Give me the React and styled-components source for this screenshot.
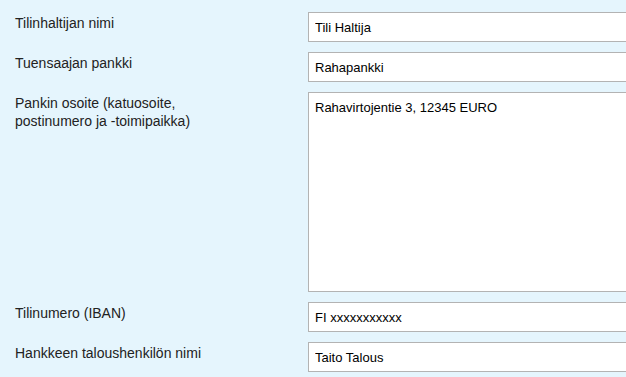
import React from "react";
import styled, { createGlobalStyle } from "styled-components";

const Global = createGlobalStyle`
  html, body {
    margin: 0;
    padding: 0;
    background: #e5f5fd;
    overflow: hidden;
  }
  body {
    font-family: "Liberation Sans", Arial, sans-serif;
  }
`;

const Form = styled.div`
  display: grid;
  grid-template-columns: 293px 340px;
  row-gap: 10px;
  padding: 12px 0 0 15px;
`;

const Label = styled.label`
  font-size: 14px;
  line-height: 18px;
  color: #222;
  padding-top: 2px;
`;

const Field = styled.input`
  box-sizing: border-box;
  height: 30px;
  width: 100%;
  margin: 0;
  padding: 0 6px;
  border: 1px solid #b3b3b3;
  background: #fff;
  font-family: "Liberation Sans", Arial, sans-serif;
  font-size: 13px;
  color: #000;
  outline: none;
`;

const Area = styled.textarea`
  box-sizing: border-box;
  height: 200px;
  width: 100%;
  margin: 0;
  padding: 6px 6px;
  border: 1px solid #b3b3b3;
  background: #fff;
  font-family: "Liberation Sans", Arial, sans-serif;
  font-size: 13px;
  line-height: 17px;
  color: #000;
  resize: none;
  outline: none;
  display: block;
`;

const rows = [
  { label: "Tilinhaltijan nimi", value: "Tili Haltija" },
  { label: "Tuensaajan pankki", value: "Rahapankki" },
  {
    label: (
      <>
        Pankin osoite (katuosoite,
        <br />
        postinumero ja -toimipaikka)
      </>
    ),
    value: "Rahavirtojentie 3, 12345 EURO",
    multi: true,
  },
  { label: "Tilinumero (IBAN)", value: "FI xxxxxxxxxxx" },
  { label: "Hankkeen taloushenkilön nimi", value: "Taito Talous" },
];

export default function App() {
  return (
    <>
      <Global />
      <Form>
        {rows.map((r, i) => (
          <React.Fragment key={i}>
            <Label>{r.label}</Label>
            {r.multi ? (
              <Area readOnly defaultValue={r.value} />
            ) : (
              <Field readOnly defaultValue={r.value} />
            )}
          </React.Fragment>
        ))}
      </Form>
    </>
  );
}
